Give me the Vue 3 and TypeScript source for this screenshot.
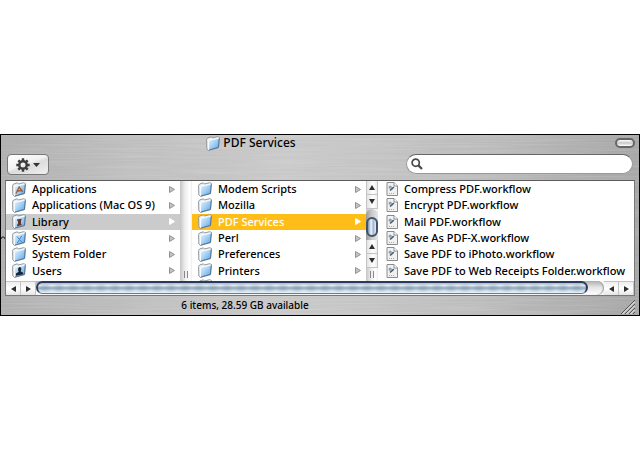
<script setup lang="ts">
import { ref } from 'vue'

interface Entry {
  name: string
  badge?: 'apps' | 'library' | 'system' | 'users'
}

const rootItems: Entry[] = [
  { name: 'Applications', badge: 'apps' },
  { name: 'Applications (Mac OS 9)' },
  { name: 'Library', badge: 'library' },
  { name: 'System', badge: 'system' },
  { name: 'System Folder' },
  { name: 'Users', badge: 'users' },
]
const libraryItems: Entry[] = [
  { name: 'Modem Scripts' },
  { name: 'Mozilla' },
  { name: 'PDF Services' },
  { name: 'Perl' },
  { name: 'Preferences' },
  { name: 'Printers' },
]
const files: string[] = [
  'Compress PDF.workflow',
  'Encrypt PDF.workflow',
  'Mail PDF.workflow',
  'Save As PDF-X.workflow',
  'Save PDF to iPhoto.workflow',
  'Save PDF to Web Receipts Folder.workflow',
]

const selectedRoot = ref('Library')
const selectedFolder = ref('PDF Services')
const query = ref('')
</script>

<template>
  <svg class="defs" aria-hidden="true">
    <defs>
      <linearGradient id="folderFill" x1="0" y1="0" x2="1" y2="1">
        <stop offset="0" stop-color="#e2f2fd" />
        <stop offset="0.45" stop-color="#a9d4f6" />
        <stop offset="1" stop-color="#5c9fe0" />
      </linearGradient>
      <filter id="brushed" x="0" y="0" width="100%" height="100%">
        <feTurbulence type="fractalNoise" baseFrequency="0.012 0.7" numOctaves="3" seed="4" />
        <feColorMatrix values="0 0 0 0 1  0 0 0 0 1  0 0 0 0 1  1.6 0 0 0 -0.55" />
      </filter>
    </defs>
    <symbol id="folder" viewBox="0 0 14 15">
      <path d="M0.6 3.4 L1.6 2 L5.4 0.8 L6.4 2 L11.6 0.7 L13.4 1.4 L12.6 11.6 L2.6 14.4 L0.8 12.8 Z" fill="#eef1f3" stroke="#868f96" stroke-width="0.9" />
      <path d="M2.8 4.6 L13.2 2 L12.4 11.4 L2.8 14 Z" fill="url(#folderFill)" />
      <path d="M2.8 14 L12.4 11.4 L13.2 2" fill="none" stroke="#4c7095" stroke-width="0.9" />
      <path d="M2.6 14 V4.6 L13 2.1" fill="none" stroke="#fff" stroke-width="0.8" />
    </symbol>
    <symbol id="doc" viewBox="0 0 12 14">
      <path d="M1 0.5 H8 L11.5 4 V13.5 H1 Z" fill="#f1f1f1" stroke="#8b8b8b" />
      <path d="M8 0.5 V4 H11.5" fill="#fff" stroke="#777" stroke-width="0.8" />
      <path d="M4 8.5 L7.8 5.2" stroke="#555" stroke-width="1.6" />
      <circle cx="4.2" cy="5.2" r="1.6" fill="#7fa5c4" />
      <path d="M3 11.5 H9" stroke="#aaa" stroke-dasharray="1 1" />
    </symbol>
  </svg>

  <main class="finder">
    <svg class="metal" aria-hidden="true"><rect width="100%" height="100%" filter="url(#brushed)" /></svg>
    <svg class="notch" viewBox="0 0 4 4" aria-hidden="true"><path d="M0 3 L1 1 L3 1 L4 3" fill="none" stroke="#222" /></svg>

    <header class="titlebar">
      <h1><svg class="folder"><use href="#folder" /></svg>PDF Services</h1>
      <button class="pill" type="button" aria-label="Toggle toolbar"></button>
    </header>

    <div class="toolbar">
      <button class="action" type="button" aria-label="Action">
        <svg class="gear" viewBox="0 0 14 14">
          <g stroke="#3d3d3d" stroke-width="2.4">
            <path d="M7 0.3 V3.5 M7 10.5 V13.7 M0.3 7 H3.5 M10.5 7 H13.7 M2.3 2.3 L4.6 4.6 M9.4 9.4 L11.7 11.7 M2.3 11.7 L4.6 9.4 M9.4 4.6 L11.7 2.3" />
            <circle cx="7" cy="7" r="3.7" fill="none" />
          </g>
        </svg>
        <svg class="caret" viewBox="0 0 7 4"><path d="M0 0 H7 L3.5 4 Z" fill="#333" /></svg>
      </button>
      <label class="search">
        <svg viewBox="0 0 12 12" aria-hidden="true">
          <circle cx="4.7" cy="4.7" r="3.6" fill="none" stroke="#4a4a4a" stroke-width="1.7" />
          <path d="M7.4 7.4 L11 11" stroke="#4a4a4a" stroke-width="2.2" />
        </svg>
        <input v-model="query" type="text" aria-label="Search" />
      </label>
    </div>

    <section class="browser">
      <div class="columns">
        <ul class="list root">
          <li v-for="item in rootItems" :key="item.name" :class="{ current: item.name === selectedRoot }">
            <button type="button" @click="selectedRoot = item.name">
              <svg class="folder" viewBox="0 0 14 15">
                <use href="#folder" />
                <path v-if="item.badge === 'apps'" d="M4 11.5 L7.2 5 L10.7 10 M4.5 9.3 L10.5 8.3" fill="none" stroke="#a45d35" stroke-width="1.4" />
                <path v-else-if="item.badge === 'library'" d="M5 5.5 L9.5 4.7 V6 L9 6.3 V10 L10 11 L5 12.3 V10.7 L6 10 V7 L5 6.6 Z" fill="#6b3424" />
                <path v-else-if="item.badge === 'system'" d="M5 5.5 L9.7 11 M9.7 5 L5.3 12" fill="none" stroke="#4184c6" stroke-width="1" />
                <path v-else-if="item.badge === 'users'" d="M7.7 4 C9.8 4 9.6 7 8.6 8.3 L11.2 9.7 V11.2 L4 12.8 V10.6 L6.8 8.8 C5.8 7.4 5.8 4.4 7.7 4 Z" fill="#1c2632" />
              </svg>
              <span>{{ item.name }}</span>
              <svg class="chevron" viewBox="0 0 6 7"><path d="M0.5 0.5 L5.5 3.5 L0.5 6.5 Z" /></svg>
            </button>
          </li>
        </ul>
        <div class="gutter">
          <i class="grip"></i>
        </div>
        <ul class="list library">
          <li v-for="item in libraryItems" :key="item.name" :class="{ active: item.name === selectedFolder }">
            <button type="button" @click="selectedFolder = item.name">
              <svg class="folder"><use href="#folder" /></svg>
              <span>{{ item.name }}</span>
              <svg class="chevron" viewBox="0 0 6 7"><path d="M0.5 0.5 L5.5 3.5 L0.5 6.5 Z" /></svg>
            </button>
          </li>
          <li class="peek"><svg class="folder"><use href="#folder" /></svg></li>
        </ul>
        <div class="gutter scroller">
          <button type="button" aria-label="Scroll up"><svg viewBox="0 0 6 5"><path d="M0 5 L3 0 L6 5 Z" /></svg></button>
          <button type="button" aria-label="Scroll down"><svg viewBox="0 0 6 5"><path d="M0 0 L3 5 L6 0 Z" /></svg></button>
          <div class="track"><i class="knob"></i></div>
          <button type="button" aria-label="Scroll up one line"><svg viewBox="0 0 6 5"><path d="M0 5 L3 0 L6 5 Z" /></svg></button>
          <button type="button" aria-label="Scroll down one line"><svg viewBox="0 0 6 5"><path d="M0 0 L3 5 L6 0 Z" /></svg></button>
          <i class="grip"></i>
        </div>
        <ul class="list files">
          <li v-for="file in files" :key="file">
            <button type="button"><svg class="doc"><use href="#doc" /></svg><span>{{ file }}</span></button>
          </li>
        </ul>
      </div>
      <div class="hscroll">
        <button type="button" aria-label="Scroll left"><svg viewBox="0 0 5 6"><path d="M5 0 L0 3 L5 6 Z" /></svg></button>
        <button type="button" aria-label="Scroll right"><svg viewBox="0 0 5 6"><path d="M0 0 L5 3 L0 6 Z" /></svg></button>
        <div class="htrack"><i class="hthumb"></i></div>
        <button type="button" aria-label="Scroll left one step"><svg viewBox="0 0 5 6"><path d="M5 0 L0 3 L5 6 Z" /></svg></button>
        <button type="button" aria-label="Scroll right one step"><svg viewBox="0 0 5 6"><path d="M0 0 L5 3 L0 6 Z" /></svg></button>
      </div>
    </section>

    <footer class="status">
      <span>6 items, 28.59 GB available</span>
      <svg class="resize" viewBox="0 0 15 15" aria-hidden="true">
        <path d="M1 15 L15 1 M5 15 L15 5 M9 15 L15 9 M13 15 L15 13" stroke="#555" />
        <path d="M2.5 15 L15 2.5 M6.5 15 L15 6.5 M10.5 15 L15 10.5" stroke="#f4f4f4" />
      </svg>
    </footer>
  </main>
</template>

<style>
body {
  background: #fff;
  padding-top: 134px;
}
</style>

<style scoped>
* {
  box-sizing: border-box;
}
.defs {
  position: absolute;
  width: 0;
  height: 0;
}
button {
  font: inherit;
  color: inherit;
  border: 0;
  padding: 0;
  margin: 0;
  background: none;
}
svg {
  display: block;
  flex: none;
}
.finder {
  position: relative;
  border: 1px solid #000;
  padding: 0 4px;
  background: linear-gradient(90deg, #afafaf, #bebebe 20%, #c9c9c9 45%, #bcbcbc 75%, #a6a6a6);
  color: #000;
  font: 500 11px/16px "Noto Sans", "Open Sans", sans-serif;
}
.finder > * {
  position: relative;
}
.finder > .metal {
  position: absolute;
  inset: 0;
  width: 100%;
  height: 100%;
  opacity: 0.16;
}
.finder > .notch {
  position: absolute;
  left: 0;
  top: 101px;
  width: 4px;
  height: 4px;
}
.folder {
  width: 14px;
  height: 15px;
}
.titlebar {
  display: grid;
  grid-template-columns: 1fr auto 1fr;
  align-items: center;
  height: 16px;
}
h1 {
  grid-column: 2;
  display: flex;
  align-items: center;
  gap: 3px;
  margin: 0;
  padding-right: 138px;
  font-size: 12px;
  font-weight: 500;
}
.pill {
  justify-self: end;
  width: 20px;
  height: 10px;
  border: 2px solid #666;
  border-radius: 5px;
  background: linear-gradient(#fff, #c8c8c8 50%, #fff);
}
.toolbar {
  display: flex;
  justify-content: space-between;
  align-items: flex-start;
  height: 29px;
  padding: 3px 2px 0;
}
.action {
  display: flex;
  align-items: center;
  justify-content: center;
  gap: 3px;
  width: 42px;
  height: 21px;
  border: 1px solid #777;
  border-radius: 4px;
  background: linear-gradient(160deg, #fff 0, #f2f2f2 45%, #dcdcdc 55%, #f0f0f0);
}
.gear {
  width: 14px;
  height: 14px;
}
.caret {
  width: 7px;
  height: 4px;
}
.search {
  display: flex;
  align-items: center;
  gap: 4px;
  width: 227px;
  height: 20px;
  padding: 0 4px;
  border: 1px solid #999;
  border-top-color: #666;
  border-radius: 10px;
  background: #fff;
}
.search svg {
  width: 12px;
  height: 12px;
}
.search input {
  flex: 1;
  min-width: 0;
  border: 0;
  outline: 0;
  padding: 0;
  background: transparent;
  font: inherit;
}
.browser {
  border: 1px solid #777;
  border-top-color: #5c5c5c;
  background: #fff;
}
.columns {
  display: grid;
  grid-template-columns: 174px 12px 174px 12px 1fr;
  height: 100px;
}
.list {
  display: grid;
  grid-template-rows: repeat(6, 1fr) 2px;
  min-width: 0;
  margin: 0;
  padding: 0;
  list-style: none;
  overflow: hidden;
}
.list button {
  display: flex;
  align-items: center;
  width: 100%;
  height: 100%;
  padding: 0 5px 0 6px;
  text-align: left;
  white-space: nowrap;
}
.list span {
  flex: 1;
  padding-left: 6px;
}
.files button {
  padding-left: 8px;
}
.doc {
  width: 12px;
  height: 14px;
}
.peek {
  height: 2px;
  padding-left: 6px;
}
.chevron {
  width: 6px;
  height: 7px;
}
.chevron path {
  fill: #c4c4c4;
  stroke: #929292;
}
.current {
  background: #cbcbcb;
}
.active {
  background: #ffbe17;
  color: #fff;
}
.current .chevron path,
.active .chevron path {
  fill: #fff;
  stroke: #fff;
}
.gutter {
  display: flex;
  flex-direction: column;
  justify-content: flex-end;
  background: linear-gradient(90deg, #c4c4c4, #ececec 40%, #fff 80%, #eee);
}
.grip {
  height: 13px;
  background: linear-gradient(#888, #888) 4px 3px / 1px 7px no-repeat,
    linear-gradient(#888, #888) 7px 3px / 1px 7px no-repeat;
}
.scroller button {
  display: grid;
  place-items: center;
  width: 100%;
  height: 14px;
  border: 1px solid #c4c4c4;
  border-top: 0;
  background: linear-gradient(90deg, #e4e4e4, #fff 60%, #eee);
}
.scroller svg {
  width: 6px;
  height: 5px;
}
.scroller path,
.hscroll path {
  fill: #2e2e2e;
}
.track {
  flex: 1;
  padding-top: 8px;
  border-radius: 8px 8px 0 0;
  background: linear-gradient(90deg, #999, #ccc 50%, #e4e4e4);
}
.knob {
  display: block;
  height: 20px;
  border: 2px solid #435269;
  border-radius: 6px;
  background: linear-gradient(90deg, #7890a8, #eef5fc 40%, #9cb5cf 65%, #e6f2fd);
}
.hscroll {
  display: flex;
  height: 14px;
  background: #f5f5f5;
}
.hscroll button {
  display: grid;
  place-items: center;
  width: 15px;
  border: 1px solid #c4c4c4;
  border-width: 1px 1px 0 0;
  background: linear-gradient(#eee, #fff 50%, #e4e4e4);
}
.hscroll svg {
  width: 5px;
  height: 6px;
}
.htrack {
  flex: 1;
  padding-right: 16px;
  border-radius: 0 7px 7px 0;
  background: linear-gradient(#b0b0b0, #e4e4e4 45%, #fff);
  box-shadow: inset -1px 0 1px #999;
}
.hthumb {
  display: block;
  height: 13px;
  border: 1px solid #2b3a5c;
  border-width: 2px 2px 1px;
  border-bottom-color: #6c7b8e;
  border-radius: 7px;
  background: radial-gradient(ellipse at center, #6f8ba466, #a8c2da00 70%) 0 0 / 14px 100%,
    linear-gradient(#a9bacb, #dfe8ef 25%, #96a9bb 50%, #cfdde8 75%, #e9f4fb);
}
.status {
  display: flex;
  justify-content: center;
  height: 19px;
  padding-right: 150px;
  font-size: 10px;
  line-height: 18px;
}
.resize {
  position: absolute;
  right: 0;
  bottom: 1px;
  width: 15px;
  height: 15px;
}
</style>
